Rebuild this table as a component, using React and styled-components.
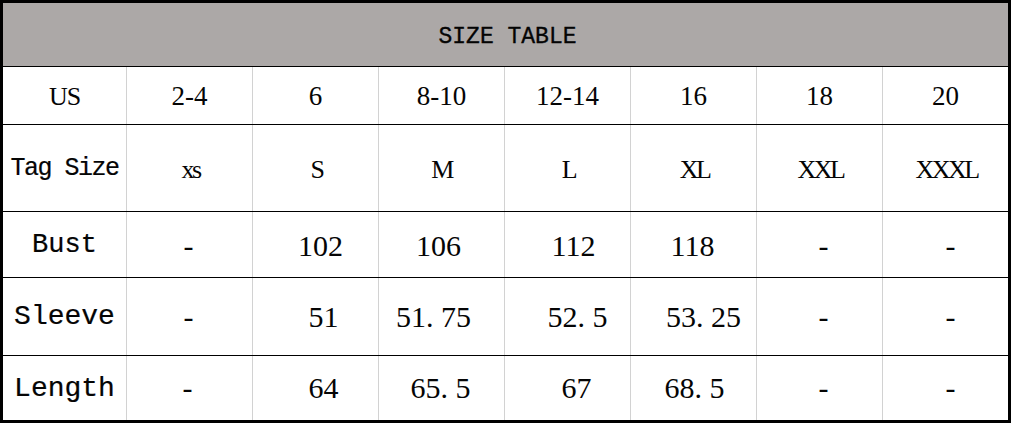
import React from "react";
import styled, { createGlobalStyle } from "styled-components";

const GlobalStyle = createGlobalStyle`
  html, body {
    margin: 0;
    padding: 0;
    background: #fff;
  }
  * {
    box-sizing: border-box;
  }
`;

const Table = styled.div`
  width: 1011px;
  height: 423px;
  border: 3px solid #000;
  background: #fff;
  color: #050505;
  display: flex;
  flex-direction: column;
`;

const Title = styled.div`
  height: 64px;
  background: #aca8a7;
  border-bottom: 1px solid #000;
  display: flex;
  align-items: center;
  justify-content: center;
  padding: 4px 0 0 4px;
  font-family: "Liberation Mono", monospace;
  font-size: 23px;
  -webkit-text-stroke: 0.3px #000;
`;

const Row = styled.div`
  display: grid;
  grid-template-columns: 123px repeat(7, 126px);
  height: ${(p) => p.$h}px;
  border-bottom: ${(p) => (p.$last ? "none" : "1px solid #000")};
`;

const Cell = styled.div`
  display: flex;
  align-items: center;
  justify-content: center;
  border-left: 1px solid #d2d2d2;
  white-space: pre;
  padding-left: ${(p) => Math.max(0, p.$dx || 0) * 2}px;
  padding-right: ${(p) => Math.max(0, -(p.$dx || 0)) * 2}px;
  padding-top: ${(p) => (p.$dy || 0) * 2}px;
  font-family: "Liberation Serif", serif;
  font-size: ${(p) => p.$size}px;
  letter-spacing: ${(p) => p.$ls || 0}px;

  &:first-child {
    border-left: none;
  }
`;

const Label = styled(Cell)`
  font-family: "Liberation Mono", monospace;
  -webkit-text-stroke: 0.2px #000;
`;

const rows = [
  {
    h: 58,
    label: "US",
    labelSize: 26,
    labelLs: -1,
    labelFont: "serif",
    size: 27,
    ls: 0,
    cells: ["2-4", "6", "8-10", "12-14", "16", "18", "20"],
    dx: [0, 0, 0, 0, 0, 0, 0],
    dy: 1,
  },
  {
    h: 87,
    label: "Tag Size",
    labelSize: 25,
    labelLs: -1.5,
    size: 26,
    ls: -2.5,
    cells: ["xs", "S", "M", "L", "XL", "XXL", "XXXL"],
    dx: [1, 1, 0, 1, 1, 1, 1],
    dy: 2,
  },
  {
    h: 66,
    label: "Bust",
    labelSize: 27,
    labelLs: 0,
    size: 30,
    ls: 0,
    cells: ["-", "102", "106", "112", "118", "-", "-"],
    dx: [-1, 5, -3, 6, -1, 4, 5],
    dy: 1,
  },
  {
    h: 78,
    label: "Sleeve",
    labelSize: 28,
    labelLs: 0,
    size: 30,
    ls: 0,
    cells: ["-", "51", "51. 75", "52. 5", "53. 25", "-", "-"],
    dx: [-1, 8, -8, 10, 10, 4, 5],
    dy: 0,
  },
  {
    h: 64,
    label: "Length",
    labelSize: 28,
    labelLs: 0,
    size: 30,
    ls: 0,
    cells: ["-", "64", "65. 5", "67", "68. 5", "-", "-"],
    dx: [-2, 8, -1, 9, 1, 4, 5],
    dy: 0,
    last: true,
  },
];

export default function App() {
  return (
    <>
      <GlobalStyle />
      <Table>
        <Title>SIZE TABLE</Title>
        {rows.map((r) => (
          <Row key={r.label} $h={r.h} $last={r.last}>
            {r.labelFont === "serif" ? (
              <Cell $size={r.labelSize} $ls={r.labelLs} $dy={r.dy}>
                {r.label}
              </Cell>
            ) : (
              <Label $size={r.labelSize} $ls={r.labelLs}>
                {r.label}
              </Label>
            )}
            {r.cells.map((c, i) => (
              <Cell
                key={i}
                $size={r.size}
                $ls={r.ls}
                $dx={r.dx[i]}
                $dy={r.dy}
              >
                {c}
              </Cell>
            ))}
          </Row>
        ))}
      </Table>
    </>
  );
}
